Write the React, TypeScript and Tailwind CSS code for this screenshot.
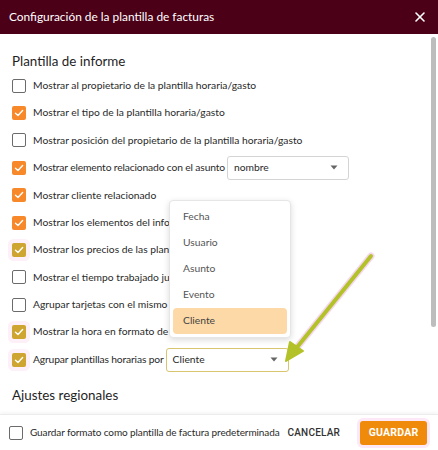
import { X } from "lucide-react";

type Row = {
  label: string;
  state: "off" | "on" | "olive";
  select?: { value: string; width: string; accent?: boolean };
};

const rows: Row[] = [
  { label: "Mostrar al propietario de la plantilla horaria/gasto", state: "off" },
  { label: "Mostrar el tipo de la plantilla horaria/gasto", state: "on" },
  { label: "Mostrar posición del propietario de la plantilla horaria/gasto", state: "off" },
  {
    label: "Mostrar elemento relacionado con el asunto",
    state: "on",
    select: { value: "nombre", width: "w-[122px]" },
  },
  { label: "Mostrar cliente relacionado", state: "on" },
  { label: "Mostrar los elementos del informe", state: "on" },
  { label: "Mostrar los precios de las plantillas", state: "olive" },
  { label: "Mostrar el tiempo trabajado junto", state: "off" },
  { label: "Agrupar tarjetas con el mismo Nombre", state: "off" },
  { label: "Mostrar la hora en formato de hora básico", state: "olive" },
  {
    label: "Agrupar plantillas horarias por",
    state: "olive",
    select: { value: "Cliente", width: "w-[123px]", accent: true },
  },
];

const options = ["Fecha", "Usuario", "Asunto", "Evento", "Cliente"];

function Check({ state }: { state: Row["state"] }) {
  if (state === "off") {
    return <span className="block shrink-0 w-[14px] h-[14px] rounded-[2px] border-[1.5px] border-[#6b6b6b] bg-white" />;
  }
  return (
    <span
      className={
        state === "on"
          ? "flex shrink-0 items-center justify-center w-[14px] h-[14px] rounded-[2px] bg-[#f7892a]"
          : "flex shrink-0 items-center justify-center w-[14px] h-[14px] rounded-[2px] bg-[#cfa531] shadow-[0_0_0_4px_#fdf0f8]"
      }
    >
      <svg width="10" height="10" viewBox="0 0 10 10" fill="none">
        <path d="M1.5 5.2 L4 7.5 L8.6 2.5" stroke="white" strokeWidth="1.4" strokeLinecap="round" strokeLinejoin="round" />
      </svg>
    </span>
  );
}

function Caret() {
  return (
    <svg width="8" height="5" viewBox="0 0 8 5">
      <path d="M0.5 0.5 L7.5 0.5 L4 4.5 Z" fill="#666" />
    </svg>
  );
}

export default function App() {
  return (
    <div
      className="relative w-[438px] h-[450px] flex flex-col overflow-hidden bg-white text-[#2a2a2a]"
      style={{ fontFamily: 'Lato, "Noto Sans", sans-serif' }}
    >
      {/* title bar */}
      <div className="h-[34px] shrink-0 flex items-center justify-between bg-[#4b0017] pl-[9px] pr-[10px] text-white">
        <span className="text-[11.9px]">Configuración de la plantilla de facturas</span>
        <X size={16} strokeWidth={2.4} />
      </div>

      {/* settings list */}
      <div className="relative flex-1 pl-[12px] pt-[16px]">
        <div className="text-[13.4px] leading-[22px] text-[#1f1f1f]">Plantilla de informe</div>
        <div className="flex flex-col">
          {rows.map((r) => (
            <div key={r.label} className="h-[27.4px] flex items-center">
              <Check state={r.state} />
              <span
                className={
                  "ml-[7px] text-[10.3px] whitespace-nowrap" + (r.select ? " tracking-[-0.15px]" : "")
                }
              >
                {r.label}
              </span>
              {r.select && (
                <div
                  className={
                    "ml-[2px] h-[24px] flex items-center justify-between pl-[6px] pr-[10px] rounded-[3px] border bg-white text-[10.3px] " +
                    r.select.width +
                    (r.select.accent ? " border-[#d8c56e]" : " border-[#d4d4d4]")
                  }
                >
                  <span>{r.select.value}</span>
                  <Caret />
                </div>
              )}
            </div>
          ))}
        </div>
        <div className="mt-[11px] text-[13.4px] leading-[22px] text-[#1f1f1f]">Ajustes regionales</div>

        {/* scrollbar thumb */}
        <div className="absolute right-[2px] top-[3px] w-[5px] h-[290px] rounded-full bg-[#bdbdbd]" />
      </div>

      {/* footer */}
      <div className="h-[36px] shrink-0 flex items-center border-t border-[#ececec] shadow-[0_-2px_3px_rgba(0,0,0,0.04)] pl-[9px] pr-[11px]">
        <span className="block shrink-0 w-[14px] h-[14px] rounded-[2px] border-[1.5px] border-[#6b6b6b]" />
        <span className="ml-[7px] text-[10px] tracking-[-0.1px] whitespace-nowrap">
          Guardar formato como plantilla de factura predeterminada
        </span>
        <span
          className="ml-[8px] text-[10px] font-medium tracking-[0.2px] text-[#333]"
          style={{ fontFamily: "Roboto, sans-serif" }}
        >
          CANCELAR
        </span>
        <button
          className="ml-auto h-[24px] w-[67px] rounded-[3px] bg-[#f08a0a] text-white text-[10.5px] font-bold tracking-[0.2px] shadow-[0_0_0_3px_#fde8f8]"
          style={{ fontFamily: "Roboto, sans-serif" }}
        >
          GUARDAR
        </button>
      </div>

      {/* open dropdown */}
      <div className="absolute left-[169px] top-[200px] w-[122px] rounded-[4px] bg-white border border-[#e6e6e6] shadow-[0_2px_6px_rgba(0,0,0,0.15)] py-[3px] px-[3px] flex flex-col">
        {options.map((o) => (
          <div
            key={o}
            className={
              "h-[26px] flex items-center pl-[10px] text-[10.3px] rounded-[4px] " +
              (o === "Cliente" ? "bg-[#fcd9a6] text-[#444]" : "text-[#555]")
            }
          >
            {o}
          </div>
        ))}
      </div>

      {/* pointer arrow */}
      <svg className="absolute left-0 top-0 pointer-events-none" width="438" height="450">
        <line x1="371" y1="256" x2="294" y2="351" stroke="#f6d7ee" strokeWidth="7" strokeLinecap="round" />
        <line x1="371" y1="256" x2="294" y2="351" stroke="#b4c229" strokeWidth="4" strokeLinecap="round" />
        <path d="M286 361 L290 342 L303 351 Z" fill="#b4c229" stroke="#b4c229" strokeWidth="2" strokeLinejoin="round" />
      </svg>
    </div>
  );
}
